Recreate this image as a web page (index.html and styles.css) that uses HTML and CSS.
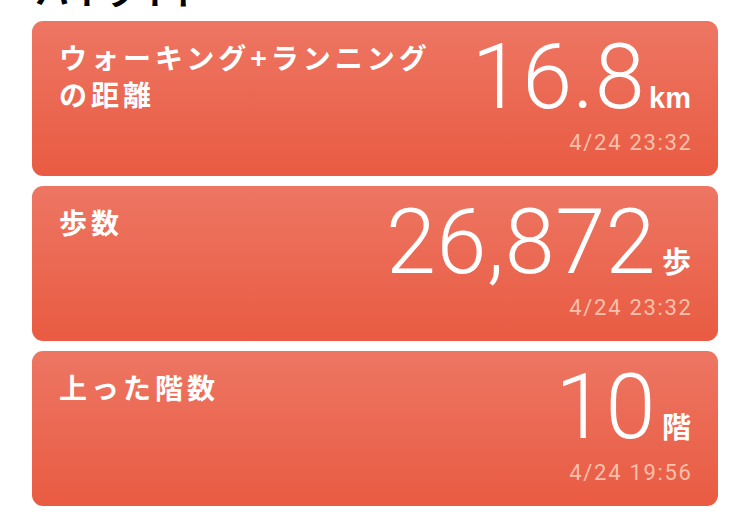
FILE: index.html
```html
<!DOCTYPE html>
<html lang="ja">
<head>
<meta charset="utf-8">
<link rel="stylesheet" href="styles.css">
</head>
<body>
<div class="page">
  <h1 class="heading">ハイライト</h1>
  <div class="cards">
    <div class="card">
      <div class="title">ウォーキング+ランニング<br>の距離</div>
      <div class="value"><span class="num">16.8</span><span class="unit unit-latin">km</span></div>
      <div class="date">4/24 23:32</div>
    </div>
    <div class="card">
      <div class="title">歩数</div>
      <div class="value"><span class="num">26,872</span><span class="unit">歩</span></div>
      <div class="date">4/24 23:32</div>
    </div>
    <div class="card">
      <div class="title">上った階数</div>
      <div class="value"><span class="num">10</span><span class="unit">階</span></div>
      <div class="date">4/24 19:56</div>
    </div>
  </div>
</div>
</body>
</html>
```

FILE: styles.css
```css
* { box-sizing: border-box; }
html, body { margin: 0; padding: 0; background: #ffffff; }
body { width: 750px; height: 529px; overflow: hidden; font-family: "Noto Sans CJK JP", "Noto Sans", sans-serif; }
.page { padding: 0 32px 0 32px; }
.heading {
  margin: -29px 0 10px 3px;
  font-size: 34px;
  line-height: 40px;
  height: 40px;
  font-weight: 700;
  color: #000;
}
.cards { display: flex; flex-direction: column; gap: 10px; }
.card {
  height: 155px;
  border-radius: 11px;
  background: linear-gradient(to bottom, #ed7663, #e95b42);
  display: grid;
  grid-template-columns: 1fr auto;
  grid-template-rows: auto 1fr;
  padding: 12px 27px 0 27px;
  color: #fff;
}
.title {
  grid-column: 1; grid-row: 1 / span 2;
  font-size: 28px;
  line-height: 37px;
  font-weight: 700;
  padding-top: 6px;
  letter-spacing: 4px;
}
.value {
  grid-column: 2; grid-row: 1;
  display: flex; align-items: baseline; justify-content: flex-end;
  height: 90px;
}
.num {
  font-family: Roboto, "Noto Sans", sans-serif;
  font-weight: 300;
  font-size: 90px;
  line-height: 90px;
  letter-spacing: 0.5px;
}
.unit {
  font-size: 29px;
  font-weight: 700;
  margin-left: 6px;
}
.unit-latin { font-family: "Liberation Sans", Arial, sans-serif; margin-left: 4px; }
.date {
  grid-column: 2; grid-row: 2;
  text-align: right;
  font-family: Roboto, "Noto Sans", sans-serif;
  font-size: 22px;
  line-height: 25px;
  margin-top: 7px;
  letter-spacing: 1.7px;
  margin-right: -1.7px;
  color: #f9c0ab;
}
```
